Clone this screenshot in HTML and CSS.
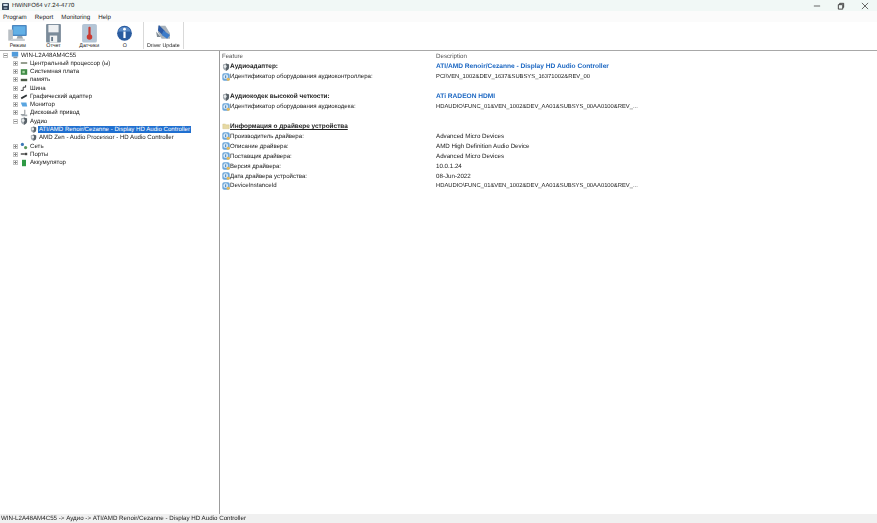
FILE: index.html
```html
<!DOCTYPE html>
<html lang="ru">
<head>
<meta charset="utf-8">
<title>HWiNFO64 v7.24-4770</title>
<link rel="stylesheet" href="styles.css">
</head>
<body>
<svg class="defs" width="0" height="0">
  <symbol id="i-shield" viewBox="0 0 10 10">
    <path d="M5 .6 8.8 2v3.2C8.8 7.4 7 8.8 5 9.6 3 8.8 1.2 7.4 1.2 5.2V2Z" fill="#a2a9af"/>
    <path d="M5 .6 8.8 2v3.2C8.8 7.4 7 8.8 5 9.6Z" fill="#596269"/>
    <circle cx="4" cy="4.4" r="1.8" fill="#e8ebed"/>
  </symbol>
  <symbol id="i-info" viewBox="0 0 10 10">
    <rect x=".4" y=".4" width="9.2" height="9.2" rx="2.2" fill="#6ba6da"/>
    <circle cx="4.6" cy="4.6" r="3" fill="#dbeaf6"/>
    <rect x="4" y="3" width="1.2" height="3.4" fill="#3a78b5"/>
    <circle cx="7.8" cy="7.8" r="2" fill="#e5b85a"/>
  </symbol>
  <symbol id="i-folder" viewBox="0 0 10 10">
    <path d="M1 2.5h3l1 1h4v5H1Z" fill="#e6d9a3" stroke="#c9bb80" stroke-width=".5"/>
  </symbol>
</svg>

<div class="window">
  <header class="titlebar">
    <svg class="app-icon" viewBox="0 0 8 8"><rect width="8" height="8" rx="1" fill="#2f4254"/><rect x="1.5" y="1" width="5" height="2.4" fill="#cfe0ea"/><rect x="2" y="5" width="4" height="2" fill="#8aa0b0"/></svg>
    <span class="title">HWiNFO64 v7.24-4770</span>
    <div class="controls">
      <svg class="ctl" viewBox="0 0 9 9"><path d="M1 4.5h7" stroke="#555" fill="none"/></svg>
      <svg class="ctl" viewBox="0 0 9 9"><path d="M1.5 3h5v5h-5ZM3 3V1.5h4.5V6H6.5" stroke="#333" fill="none"/></svg>
      <svg class="ctl" viewBox="0 0 9 9"><path d="M1 1l7 7M8 1 1 8" stroke="#555" fill="none"/></svg>
    </div>
  </header>

  <nav class="menubar">
    <span>Program</span><span>Report</span><span>Monitoring</span><span>Help</span>
  </nav>

  <div class="toolbar">
    <div class="tool">
      <svg class="tool-icon" viewBox="0 0 22 20">
        <rect x="5" y="1" width="16" height="12" rx="1" fill="#4a86c0"/>
        <rect x="6.5" y="2.5" width="13" height="9" fill="#62b0e6"/>
        <path d="M11 13h5l1 3h-7Z" fill="#9fa7ad"/>
        <rect x="1" y="6" width="5" height="12" fill="#b9bfc4"/>
        <rect x="4" y="16" width="15" height="2.5" rx="1" fill="#c9ced2"/>
      </svg>
      <span>Режим</span>
    </div>
    <div class="tool">
      <svg class="tool-icon" viewBox="0 0 22 20">
        <rect x="3" y="0" width="16" height="20" rx="1" fill="#7b8b9a"/>
        <rect x="5.5" y="1" width="11" height="8" fill="#eef0f2"/>
        <rect x="7" y="12.5" width="8" height="7.5" fill="#f1f2f3"/>
        <rect x="8.5" y="14" width="2" height="4.5" fill="#66788a"/>
      </svg>
      <span>Отчет</span>
    </div>
    <div class="tool">
      <svg class="tool-icon" viewBox="0 0 22 20">
        <rect x="3" y="0" width="16" height="20" rx="2" fill="#b4c5d6"/>
        <rect x="9.8" y="3" width="2.4" height="10" rx="1" fill="#c93a32"/>
        <circle cx="11" cy="14" r="3" fill="#c93a32"/>
      </svg>
      <span>Датчики</span>
    </div>
    <div class="tool">
      <svg class="tool-icon" viewBox="0 0 22 20">
        <circle cx="11" cy="10" r="8" fill="#2a5b9f"/>
        <path d="M4 8a7.5 7.5 0 0 1 14 0Z" fill="#5a8ac6"/>
        <circle cx="11" cy="5.6" r="1.5" fill="#fff"/>
        <rect x="9.8" y="8.2" width="2.4" height="7" fill="#fff"/>
      </svg>
      <span>О</span>
    </div>
    <i class="tool-sep"></i>
    <div class="tool tool-wide">
      <svg class="tool-icon" viewBox="0 0 22 20">
        <path d="M5 2h8l5 8v6H9L5 9Z" fill="#a8b2bb"/>
        <path d="M6 1l7 7-2 5-6-6Z" fill="#2b5aa6"/>
        <path d="M11 7l7 5-3 4-6-4Z" fill="#3d7cc9"/>
        <path d="M3 8l5 6H4Z" fill="#7e8a94"/>
      </svg>
      <span>Driver Update</span>
    </div>
    <i class="tool-sep"></i>
  </div>

  <main class="panes">
    <aside class="tree">
      <div class="node lvl0"><b class="exp minus"></b><svg class="ico" viewBox="0 0 10 10"><rect x="1" y="1" width="8" height="6" fill="#4f9bdc"/><rect x="3" y="7" width="5" height="2" fill="#8c97a0"/></svg><span>WIN-L2A48AM4C55</span></div>
      <div class="node lvl1"><b class="exp"></b><svg class="ico" viewBox="0 0 10 10"><path d="M1 5h8" stroke="#5c6a52" stroke-width="1.6"/></svg><span>Центральный процессор (ы)</span></div>
      <div class="node lvl1"><b class="exp"></b><svg class="ico" viewBox="0 0 10 10"><rect x="1" y="1.5" width="8" height="7" fill="#3f8a45"/><rect x="3" y="3.5" width="3" height="3" fill="#a9d6a4"/></svg><span>Системная плата</span></div>
      <div class="node lvl1"><b class="exp"></b><svg class="ico" viewBox="0 0 10 10"><rect x="1" y="3.5" width="8" height="3" fill="#4c5a46"/></svg><span>память</span></div>
      <div class="node lvl1"><b class="exp"></b><svg class="ico" viewBox="0 0 10 10"><path d="M1 8h3V4h3V1.5" stroke="#333" fill="none" stroke-width="1.2"/></svg><span>Шина</span></div>
      <div class="node lvl1"><b class="exp"></b><svg class="ico" viewBox="0 0 10 10"><path d="M1 7l7-4 1 2-7 4Z" fill="#2e3336"/></svg><span>Графический адаптер</span></div>
      <div class="node lvl1"><b class="exp"></b><svg class="ico" viewBox="0 0 10 10"><path d="M1 2h7l1 5H3Z" fill="#5aa5e0"/></svg><span>Монитор</span></div>
      <div class="node lvl1"><b class="exp"></b><svg class="ico" viewBox="0 0 10 10"><path d="M6 1v6H1" stroke="#6d757b" fill="none"/><rect x="2" y="7" width="7" height="2" fill="#a4abb0"/></svg><span>Дисковый привод</span></div>
      <div class="node lvl1"><b class="exp minus"></b><svg class="ico"><use href="#i-shield"/></svg><span>Аудио</span></div>
      <div class="node lvl2 selected"><svg class="ico"><use href="#i-shield"/></svg><span>ATI/AMD Renoir/Cezanne - Display HD Audio Controller</span></div>
      <div class="node lvl2"><svg class="ico"><use href="#i-shield"/></svg><span>AMD Zen - Audio Processor - HD Audio Controller</span></div>
      <div class="node lvl1"><b class="exp"></b><svg class="ico" viewBox="0 0 10 10"><circle cx="3" cy="3" r="2" fill="#3b78b8"/><circle cx="7" cy="7" r="2" fill="#5a9a5e"/></svg><span>Сеть</span></div>
      <div class="node lvl1"><b class="exp"></b><svg class="ico" viewBox="0 0 10 10"><path d="M1 5h5" stroke="#333" stroke-width="1.6"/><rect x="6" y="3.5" width="3" height="3" fill="#444"/></svg><span>Порты</span></div>
      <div class="node lvl1"><b class="exp"></b><svg class="ico" viewBox="0 0 10 10"><rect x="2.5" y="1" width="5" height="8" fill="#2f9a45"/></svg><span>Аккумулятор</span></div>
    </aside>

    <section class="details">
      <div class="row head"><span class="feat">Feature</span><span class="desc">Description</span></div>
      <div class="row"><svg class="ico"><use href="#i-shield"/></svg><span class="feat strong">Аудиоадаптер:</span><span class="desc accent">ATI/AMD Renoir/Cezanne - Display HD Audio Controller</span></div>
      <div class="row"><svg class="ico"><use href="#i-info"/></svg><span class="feat">Идентификатор оборудования аудиоконтроллера:</span><span class="desc id">PCI\VEN_1002&amp;DEV_1637&amp;SUBSYS_16371002&amp;REV_00</span></div>
      <div class="row"></div>
      <div class="row"><svg class="ico"><use href="#i-shield"/></svg><span class="feat strong">Аудиокодек высокой четкости:</span><span class="desc accent">ATi RADEON HDMI</span></div>
      <div class="row"><svg class="ico"><use href="#i-info"/></svg><span class="feat">Идентификатор оборудования аудиокодека:</span><span class="desc id">HDAUDIO\FUNC_01&amp;VEN_1002&amp;DEV_AA01&amp;SUBSYS_00AA0100&amp;REV_...</span></div>
      <div class="row"></div>
      <div class="row"><svg class="ico"><use href="#i-folder"/></svg><span class="feat strong under">Информация о драйвере устройства</span></div>
      <div class="row"><svg class="ico"><use href="#i-info"/></svg><span class="feat">Производитель драйвера:</span><span class="desc">Advanced Micro Devices</span></div>
      <div class="row"><svg class="ico"><use href="#i-info"/></svg><span class="feat">Описание драйвера:</span><span class="desc">AMD High Definition Audio Device</span></div>
      <div class="row"><svg class="ico"><use href="#i-info"/></svg><span class="feat">Поставщик драйвера:</span><span class="desc">Advanced Micro Devices</span></div>
      <div class="row"><svg class="ico"><use href="#i-info"/></svg><span class="feat">Версия драйвера:</span><span class="desc">10.0.1.24</span></div>
      <div class="row"><svg class="ico"><use href="#i-info"/></svg><span class="feat">Дата драйвера устройства:</span><span class="desc">08-Jun-2022</span></div>
      <div class="row"><svg class="ico"><use href="#i-info"/></svg><span class="feat">DeviceInstanceId</span><span class="desc id">HDAUDIO\FUNC_01&amp;VEN_1002&amp;DEV_AA01&amp;SUBSYS_00AA0100&amp;REV_...</span></div>
    </section>
  </main>

  <footer class="statusbar">WIN-L2A48AM4C55 -&gt; Аудио -&gt; ATI/AMD Renoir/Cezanne - Display HD Audio Controller</footer>
</div>
</body>
</html>
```

FILE: styles.css
```css
* { box-sizing: border-box; }
html, body { margin: 0; padding: 0; height: 100%; background: #fff; }
body { font-family: "Liberation Sans", Arial, sans-serif; font-size: 6.1px; color: #222; overflow: hidden; text-rendering: geometricPrecision; }
.defs { position: absolute; }
.window { display: flex; flex-direction: column; width: 877px; height: 523px; filter: blur(.2px); }

.titlebar { display: flex; align-items: center; height: 11px; padding: 1px 0 0 2px; background: #f1f8f6; flex: none; }
.app-icon { width: 7px; height: 7px; margin-right: 3px; }
.title { font-size: 6px; }
.controls { display: flex; margin-left: auto; gap: 16px; padding-right: 8px; }
.ctl { width: 8px; height: 8px; }

.menubar { display: flex; align-items: center; gap: 8px; height: 11px; padding: 1px 0 0 3px; background: #fbfbfb; font-size: 6.2px; flex: none; }

.toolbar { display: flex; height: 28.5px; background: #fff; border-bottom: 1px solid #a8a8a8; flex: none; }
.tool { display: flex; flex-direction: column; align-items: center; width: 35.7px; padding-top: 2px; font-size: 5.3px; }
.tool-wide { width: 39px; }
.tool-icon { width: 21px; height: 18.5px; }
.tool-sep { width: 1px; margin: 0 0 1px; background: #d9d9d9; }

.panes { display: flex; flex: 1; min-height: 0; }
.tree { width: 220px; padding: .5px 0 0 3px; border-right: 1px solid #9c9c9c; flex: none; }
.node { display: flex; align-items: center; height: 8.27px; white-space: nowrap; }
.lvl1 { padding-left: 10px; }
.lvl2 { padding-left: 27px; }
.exp { position: relative; width: 5px; height: 5px; margin-right: 2px; border: 1px solid #c4c4c4; flex: none; }
.lvl0 .exp { margin-right: 3px; }
.exp::before { content: ""; position: absolute; left: 0; right: 0; top: 1px; height: 1px; background: #888; }
.exp::after { content: ""; position: absolute; top: 0; bottom: 0; left: 1px; width: 1px; background: #888; }
.exp.minus::after { display: none; }
.ico { width: 8px; height: 8px; margin-right: 2px; flex: none; }
.lvl2 .ico { width: 7px; height: 7px; margin-right: 1px; }
.lvl2 span { padding: 0 1px; }
.selected span { background: #1f6fd0; color: #fff; }

.details { flex: 1; padding: 1.5px 0 0 2px; min-width: 0; }
.row { display: flex; align-items: center; height: 9.93px; white-space: nowrap; }
.row .ico { margin-right: 0; }
.row.head { color: #555; }
.head .feat { width: 214px; }
.feat { width: 206px; flex: none; }
.desc { font-size: 6.2px; }
.desc.id { font-size: 5.83px; }
.strong { font-weight: bold; font-size: 6.45px; }
.under { text-decoration: underline; }
.desc.accent { color: #1a66c2; font-weight: bold; font-size: 6.6px; }

.statusbar { display: flex; align-items: center; height: 9px; padding-left: 1px; background: #f0f0f0; font-size: 6.2px; flex: none; }
```
